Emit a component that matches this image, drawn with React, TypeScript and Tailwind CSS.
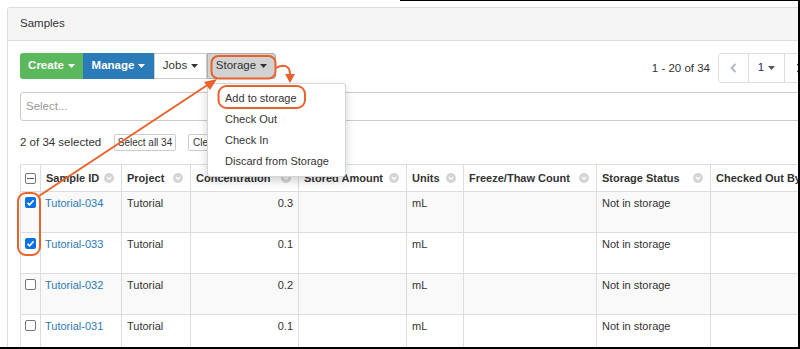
import React from "react";

const ORANGE = "#e8622c";

const columns = [
  { label: "Sample ID", w: "w-[81px]" },
  { label: "Project", w: "w-[69px]" },
  { label: "Concentration", w: "w-[108px]" },
  { label: "Stored Amount", w: "w-[108px]" },
  { label: "Units", w: "w-[57px]" },
  { label: "Freeze/Thaw Count", w: "w-[133px]" },
  { label: "Storage Status", w: "w-[114px]" },
  { label: "Checked Out By", w: "w-[130px]" },
];

const rows = [
  { id: "Tutorial-034", conc: "0.3", checked: true },
  { id: "Tutorial-033", conc: "0.1", checked: true },
  { id: "Tutorial-032", conc: "0.2", checked: false },
  { id: "Tutorial-031", conc: "0.1", checked: false },
];

function Caret({ color = "currentColor" }: { color?: string }) {
  return (
    <svg width="7" height="4" viewBox="0 0 7 4" className="ml-[4px]">
      <path d="M0 0 L7 0 L3.5 4 Z" fill={color} />
    </svg>
  );
}

function SortIcon() {
  return (
    <svg width="10" height="10" viewBox="0 0 10 10" className="shrink-0">
      <circle cx="5" cy="5" r="5" fill="#d4d4d4" />
      <path d="M2.8 4 L5 6.2 L7.2 4" stroke="#fff" strokeWidth="1.4" fill="none" />
    </svg>
  );
}

function Check({ state }: { state: "on" | "off" | "mixed" }) {
  if (state === "on") {
    return (
      <span className="flex h-[11px] w-[11px] items-center justify-center rounded-[2px] bg-[#0b72e6]">
        <svg width="9" height="9" viewBox="0 0 9 9">
          <path d="M1.5 4.8 L3.6 6.8 L7.6 2.2" stroke="#fff" strokeWidth="1.6" fill="none" />
        </svg>
      </span>
    );
  }
  return (
    <span className="flex h-[11px] w-[11px] items-center justify-center rounded-[2px] border border-[#767676] bg-white">
      {state === "mixed" && <span className="h-[1px] w-[7px] bg-[#555]" />}
    </span>
  );
}

export default function App() {
  return (
    <div className="relative h-[349px] w-[800px] overflow-hidden border-r-2 border-b-2 border-black bg-white font-['Liberation_Sans',Arial,sans-serif] text-[11px] text-[#333]">
      <span className="absolute left-[400px] right-0 top-0 h-[1px] bg-black" />

      {/* Panel */}
      <div className="ml-[7px] mt-[7px] w-[821px] rounded-[3px] border border-[#ddd]">
        <div className="flex h-[33px] items-center border-b border-[#ddd] bg-[#f5f5f5] px-[12px] text-[11.5px]">
          Samples
        </div>

        <div className="px-[12px] pt-[12px]">
          {/* Toolbar */}
          <div className="flex h-[26px] items-start">
            <div className="flex h-[26px] text-[11.5px]">
              <button className="flex w-[63px] items-center justify-center rounded-l-[3px] bg-[#5cb85c] font-bold text-white">
                Create
                <Caret />
              </button>
              <button className="flex w-[71px] items-center justify-center bg-[#2b7bb9] font-bold text-white">
                Manage
                <Caret />
              </button>
              <button className="flex w-[53px] items-center justify-center border border-[#ccc] bg-white text-[#333]">
                Jobs
                <Caret />
              </button>
              <button className="flex w-[69px] items-center justify-center rounded-r-[3px] border border-[#adadad] bg-[#d2d2d2] text-[#333]">
                Storage
                <Caret />
              </button>
            </div>
            <div className="ml-auto flex items-center">
              <span className="mr-[8px] mt-[1px] text-[11.5px]">1 - 20 of 34</span>
              <div className="flex h-[30px] rounded-[3px] border border-[#ddd] text-[11.5px]">
                <span className="flex w-[29px] items-center justify-center">
                  <svg width="7" height="10" viewBox="0 0 7 10">
                    <path d="M5.5 1 L1.5 5 L5.5 9" stroke="#b0b6c4" strokeWidth="1.8" fill="none" />
                  </svg>
                </span>
                <span className="flex w-[36px] items-center justify-center border-l border-[#ddd] text-[#2a2a5a]">
                  1
                  <Caret color="#555" />
                </span>
                <span className="flex w-[30px] items-center justify-center border-l border-[#ddd]">
                  <svg width="7" height="10" viewBox="0 0 7 10">
                    <path d="M1.5 1 L5.5 5 L1.5 9" stroke="#222" strokeWidth="1.8" fill="none" />
                  </svg>
                </span>
              </div>
            </div>
          </div>

          {/* Filter input */}
          <div className="mt-[13px] flex h-[29px] items-center rounded-[3px] border border-[#ccc] px-[5px] text-[11.5px] text-[#999]">
            Select...
          </div>

          {/* Selection row */}
          <div className="mt-[13px] flex h-[17px] items-center">
            <span className="w-[94px] text-[11.5px]">2 of 34 selected</span>
            <span className="flex h-[17px] w-[62px] items-center justify-center rounded-[2px] border border-[#ccc] text-[10px]">
              Select all 34
            </span>
            <span className="ml-[12px] flex h-[17px] w-[30px] items-center overflow-hidden rounded-[2px] border border-[#ccc] px-[4px] text-[10px]">
              Clear
            </span>
          </div>

          {/* Table */}
          <table className="mt-[13px] w-[821px] table-fixed border-collapse text-[11px]">
            <thead>
              <tr className="h-[27px]">
                <th className="w-[20px] border border-[#ddd] p-0">
                  <div className="flex justify-center">
                    <Check state="mixed" />
                  </div>
                </th>
                {columns.map((c) => (
                  <th key={c.label} className={`${c.w} border border-[#ddd] pl-[5px] pr-[7px] text-left font-bold`}>
                    <div className="flex items-center justify-between whitespace-nowrap">
                      <span>{c.label}</span>
                      <SortIcon />
                    </div>
                  </th>
                ))}
              </tr>
            </thead>
            <tbody>
              {rows.map((r, i) => (
                <tr key={r.id} className={`h-[41px] align-top ${i % 2 === 0 ? "bg-[#f9f9f9]" : "bg-white"}`}>
                  <td className="border border-[#ddd] pt-[5px]">
                    <div className="flex justify-center">
                      <Check state={r.checked ? "on" : "off"} />
                    </div>
                  </td>
                  <td className="border border-[#ddd] px-[4px] pt-[3px] text-[#2a7ab8]">{r.id}</td>
                  <td className="border border-[#ddd] px-[5px] pt-[3px]">Tutorial</td>
                  <td className="border border-[#ddd] px-[5px] pt-[3px] text-right">{r.conc}</td>
                  <td className="border border-[#ddd]" />
                  <td className="border border-[#ddd] px-[5px] pt-[3px]">mL</td>
                  <td className="border border-[#ddd]" />
                  <td className="border border-[#ddd] px-[5px] pt-[3px]">Not in storage</td>
                  <td className="border border-[#ddd]" />
                </tr>
              ))}
            </tbody>
          </table>
        </div>
      </div>

      {/* Storage dropdown menu */}
      <div className="absolute left-[207px] top-[83px] w-[139px] rounded-[3px] border border-[#d6d6d6] bg-white py-[4px] text-[11px] shadow-[0_4px_10px_rgba(0,0,0,0.18)]">
        {["Add to storage", "Check Out", "Check In", "Discard from Storage"].map((t) => (
          <div key={t} className="flex h-[21px] items-center whitespace-nowrap pl-[17px]">
            {t}
          </div>
        ))}
      </div>

      {/* Annotations */}
      <svg className="pointer-events-none absolute left-0 top-0" width="800" height="349" viewBox="0 0 800 349">
        <g stroke={ORANGE} strokeWidth="2" fill="none">
          <rect x="211.5" y="56" width="64" height="22.5" rx="7" />
          <rect x="218.5" y="86" width="86.5" height="22" rx="8" />
          <rect x="18" y="193" width="22" height="62" rx="8" />
          <line x1="39" y1="196" x2="209" y2="84" />
          <path d="M276 68 C283 64 290 65 290 74" />
        </g>
        <g fill={ORANGE}>
          <polygon points="217,79 204,82 210,90" />
          <polygon points="285,74 295,74 290,83" />
        </g>
      </svg>
    </div>
  );
}
